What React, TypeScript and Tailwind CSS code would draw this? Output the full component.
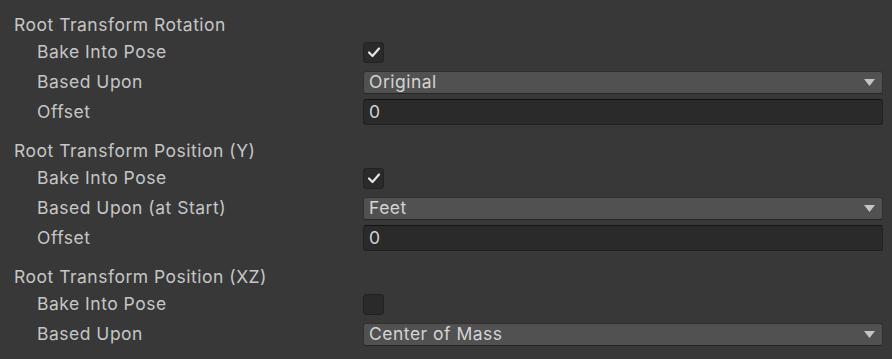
import React from 'react';

type Row =
  | { label: string; kind: 'check'; checked: boolean }
  | { label: string; kind: 'select'; value: string }
  | { label: string; kind: 'input'; value: string };

const groups: { title: string; rows: Row[] }[] = [
  {
    title: 'Root Transform Rotation',
    rows: [
      { label: 'Bake Into Pose', kind: 'check', checked: true },
      { label: 'Based Upon', kind: 'select', value: 'Original' },
      { label: 'Offset', kind: 'input', value: '0' },
    ],
  },
  {
    title: 'Root Transform Position (Y)',
    rows: [
      { label: 'Bake Into Pose', kind: 'check', checked: true },
      { label: 'Based Upon (at Start)', kind: 'select', value: 'Feet' },
      { label: 'Offset', kind: 'input', value: '0' },
    ],
  },
  {
    title: 'Root Transform Position (XZ)',
    rows: [
      { label: 'Bake Into Pose', kind: 'check', checked: false },
      { label: 'Based Upon', kind: 'select', value: 'Center of Mass' },
    ],
  },
];

const Field: React.FC<{ row: Row }> = ({ row }) => {
  if (row.kind === 'check') {
    return (
      <div className="w-[21px] h-[21px] rounded-[3px] bg-[#2a2a2a] border border-[#222] flex items-center justify-center">
        {row.checked && (
          <svg width="14" height="12" viewBox="0 0 14 12">
            <path d="M2 6.5 L5.5 10 L12 2.5" fill="none" stroke="#e4e4e4" strokeWidth="2.2" strokeLinecap="round" strokeLinejoin="round" />
          </svg>
        )}
      </div>
    );
  }
  if (row.kind === 'select') {
    return (
      <div className="h-[23px] flex-1 rounded-[3px] bg-[#515151] border border-[#303030] border-b-[#262626] flex items-center pl-[5px] pr-[7px]">
        <span className="flex-1 text-[#d4d4d4]">{row.value}</span>
        <svg width="11" height="7" viewBox="0 0 11 7">
          <path d="M0 0 H11 L5.5 7 Z" fill="#c4c4c4" />
        </svg>
      </div>
    );
  }
  return (
    <div className="h-[26px] flex-1 rounded-[3px] bg-[#2a2a2a] border border-[#212121] border-t-[#141414] flex items-center pl-[5px]">
      <span className="text-[#d4d4d4]">{row.value}</span>
    </div>
  );
};

export default function App() {
  return (
    <div
      className="w-[892px] h-[359px] bg-[#383838] text-[#c6c6c6] text-[17.5px] tracking-[0.5px] pt-[14px] pl-[14px] pr-[9px] flex flex-col gap-[13px] overflow-hidden"
      style={{ fontFamily: 'Inter, "Noto Sans", sans-serif' }}
    >
      {groups.map((g) => (
        <div key={g.title} className="flex flex-col">
          <div className="h-[23px] flex items-center">{g.title}</div>
          {g.rows.map((r, i) => (
            <div key={i} className="h-[30px] flex items-center">
              <div className="w-[349px] pl-[23px] shrink-0">{r.label}</div>
              <div className="flex-1 flex items-center">
                <Field row={r} />
              </div>
            </div>
          ))}
        </div>
      ))}
    </div>
  );
}
